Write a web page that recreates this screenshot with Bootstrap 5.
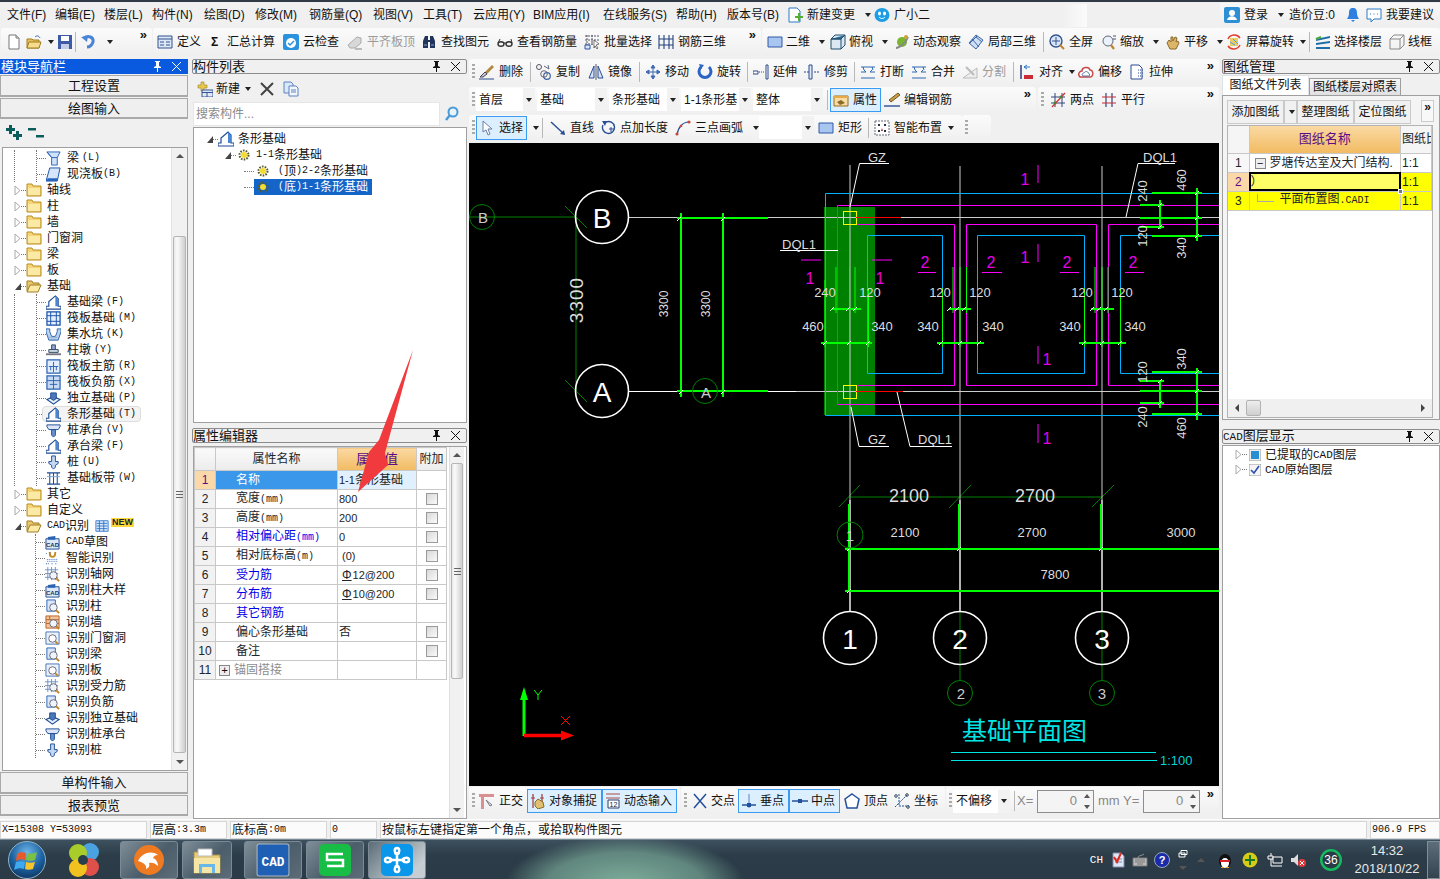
<!DOCTYPE html>
<html lang="zh-CN">
<head>
<meta charset="UTF-8">
<title>基础平面图</title>
<link rel="stylesheet" href="https://cdn.jsdelivr.net/npm/bootstrap@5.3.0/dist/css/bootstrap.min.css">
<style>
html,body{margin:0;padding:0;width:1440px;height:879px;overflow:hidden}
body{background:#f0f0f0;color:#111;font:12px/16px "Liberation Sans","Noto Sans CJK SC",sans-serif}
.lat{font:10px/16px "Liberation Mono","Noto Sans CJK SC",monospace}
.val{font:11px/16px "Liberation Sans",sans-serif}
.k{margin-left:3px}
.ic{width:16px;height:16px;flex:none;display:block}
.w12{width:12px}.w20{width:20px}.w21{width:21px}.w46{width:46px}.w47{width:47px}.w48{width:48px}.w49{width:49px}.w50{width:50px}.w51{width:51px}.w52{width:52px}.w54{width:54px}.w55{width:55px}.w56{width:56px}.w57{width:57px}.w59{width:59px}.w60{width:60px}.w63{width:63px}.w64{width:64px}.w65{width:65px}.w70{width:70px}.w72{width:72px}.w73{width:73px}.w74{width:74px}.w75{width:75px}.w76{width:76px}.w79{width:79px}.w80{width:80px}.w84{width:84px}.w85{width:85px}.w87{width:87px}.w61{width:61px}.w83{width:83px}
.top-line{height:2px;background:#2f3a44}
.menu-bar{height:26px;padding-left:7px}
.menu-bar>*{flex:none}
.menu-right{margin-left:auto;height:24px;padding-left:4px;background:linear-gradient(#f8f8f8,#eee);width:220px}
.menu-gap{width:25px;height:23px;background:linear-gradient(90deg,#f0f0f0,#fbfbfb);margin-left:auto;margin-right:2px}
.tool-row{height:30px}
.seg{height:28px;background:linear-gradient(#fbfbfb,#efefef);border-radius:3px;flex:none;position:relative}
.t{display:flex;align-items:center;gap:4px;flex:none;height:24px;white-space:nowrap}
.t.off{color:#9a9a9a}
.t.g3{gap:3px}
.cr{display:inline-block;flex:none;width:0;height:0;border-top:4px solid #222;border-left:3px solid transparent;border-right:3px solid transparent;margin-left:6px}
.cr.tight{margin-left:2px}
.sep{width:1px;height:20px;background:#b8b8b8;margin:0 5px 0 3px;flex:none}
.sep.tight{margin:0 2px}
.more{position:absolute;right:5px;top:1px;font:bold 13px/12px "Liberation Sans",sans-serif;color:#111}
.grip{width:3px;height:16px;margin:0 4px 0 3px;flex:none;background:repeating-linear-gradient(#aaa 0 2px,transparent 2px 4px)}
.grip.tight{margin-right:1px}
.on{background:#dcefff;border:1px solid #3b9bf2;padding:0 2px}
.dd{display:flex;align-items:center;height:23px;background:#fff;margin-right:2px;flex:none;padding-left:3px}
.dd b{font-weight:400;flex:1;white-space:nowrap;overflow:hidden}
.dd em{width:12px;height:23px;background:#f2f2f2;display:flex;align-items:center;justify-content:center;flex:none}
.dd em .cr{margin:0}
.work{height:761px;padding-top:1px}
.col-l{width:188px;margin-right:4px;flex:none}
.col-m{width:275px;margin-right:2px;flex:none}
.col-c{width:750px;margin-right:3px;flex:none}
.col-r{width:218px;flex:none}
.title{height:15px;flex:none;display:flex;align-items:center;border:1px solid #8c8c8c;border-radius:2px;font-size:13px;line-height:13px;background:#f0f0f0;padding-right:5px;white-space:nowrap}
.title.act{background:#0a5ae0;color:#fff;border-color:#0a5ae0;border-radius:0}
.title span{margin-right:auto}
.title .lat{font-size:11px;margin:0;line-height:13px}
.title svg{width:11px;height:11px;margin-left:8px;flex:none}
.wbtn{--bs-btn-padding-y:0;--bs-btn-font-size:13px;--bs-btn-border-radius:0;--bs-btn-line-height:18px;--bs-btn-color:#111;--bs-btn-bg:#efefef;--bs-btn-border-color:#a9a9a9;border-width:1px;display:block;width:100%;margin-top:1px;border-bottom-width:2px;flex:none;padding-top:1px}
.h22{height:22px}.h21{height:21px}
.lbar{height:27px;flex:none}
.lbar .ic{margin-left:6px}
.box{border:1px solid #a0a0a0;background:#fff;overflow:hidden}
.tree-side{height:624px;margin-top:1px;margin-left:2px;flex:none}
.tree{flex:1;padding-top:2px;min-width:0}
.nd{display:flex;align-items:center;height:16px;white-space:nowrap}
.nd.l1{padding-left:11px}
.tw{width:7px;height:9px;flex:none;display:block}
.dots{height:1px;flex:none;border-top:1px dotted #777}
.d5{width:5px}.d9{width:9px}.d10{width:10px}
.nd.l1 .ic{margin-right:5px}
.nd.l2 .ic{margin-right:6px;width:15px;height:15px}
.nb{margin:0 2px 0 6px!important;width:14px!important}
.kid1{margin-left:11px;border-left:1px dotted #777}
.kid2{margin-left:21px;border-left:1px dotted #777}
.sel-soft{background:#f3f3f3;border:1px solid #ddd;border-radius:4px;height:16px;padding:0 4px 0 3px;margin-left:-4px;display:flex;align-items:center}
.new-tag{font:bold 9px/9px "Liberation Sans",sans-serif;background:#ffd83a;color:#223;padding:0 1px;margin-top:-7px}
.sbar{width:16px;background:#f1f1f1;flex:none;border-left:1px solid #e3e3e3}
.sbar u,.hbar u{display:flex;align-items:center;justify-content:center;text-decoration:none;flex:none;height:16px}
.up{width:0;height:0;border-bottom:4px solid #555;border-left:4px solid transparent;border-right:4px solid transparent}
.down{width:0;height:0;border-top:4px solid #555;border-left:4px solid transparent;border-right:4px solid transparent}
.lf{width:0;height:0;border-right:4px solid #444;border-top:4px solid transparent;border-bottom:4px solid transparent}
.rt{width:0;height:0;border-left:4px solid #444;border-top:4px solid transparent;border-bottom:4px solid transparent}
.sp72{height:72px;flex:none}
.thumb{background:linear-gradient(90deg,#e8e8e8,#fafafa 30%,#cfcfcf);border:1px solid #b5b5b5;border-radius:2px;margin:0 1px;display:flex;align-items:center;justify-content:center}
.thumb-a{height:517px}.thumb-b{height:216px}
.thumb i{width:7px;height:7px;background:repeating-linear-gradient(#666 0 1px,transparent 1px 3px)}
.m-bar{height:27px;margin-top:1px;flex:none;padding-left:5px}
.m-search{height:25px;flex:none;margin-left:1px}
.m-input{width:247px;height:24px;background:#fff;border:1px solid #e6e6e6;color:#8a8a8a;padding:3px 2px;line-height:16px}
.m-tree{height:296px;margin-left:1px;flex:none;padding-top:3px}
.selrow{background:#1565c8;color:#fff;padding:0 4px 0 0;height:16px;line-height:16px;display:flex;align-items:center}
.m-gap{height:5px;flex:none}
.grid-box{flex:1;display:flex;margin:3px 0 0 1px;min-height:0}
.pg{width:253px;table-layout:fixed;border-collapse:collapse;margin:0;flex:none;align-self:flex-start;--bs-table-bg:transparent}
.pg td,.pg th{height:19px;padding:0 1px;border:1px solid #c8c8c8;font-weight:400;line-height:14px;overflow:hidden;white-space:nowrap;background:#fff;vertical-align:middle}
.pg .rn{background:#f2f2f2;text-align:center}
.pg .hd th{height:23px;background:linear-gradient(#fafafa,#ececec);text-align:center}
.pg .hd .gold{background:linear-gradient(#fad9a3,#f2bb62);color:#5b0d86;font-size:14px}
.pg .act .rn{background:#fbd8a7;color:#5b0d86}
.pg .act .nm{background:#3b97ea;color:#fff}
.pg .act .vl{background:#e0f0ff}
.pg .nm{padding-left:20px}
.pg .blue{color:#0000e6}
.pg .grey{color:#8d8d8d;padding-left:3px}
.pg .ck{text-align:center;padding:0}
.rebar{text-decoration:underline;text-underline-offset:1px;margin:0 1px 0 3px}
.cbx{display:inline-block;width:12px;height:12px;border:1px solid #9a9a9a;background:linear-gradient(135deg,#d8d8d8,#fafafa);vertical-align:-2px}
.pl{display:inline-block;width:11px;height:11px;border:1px solid #888;background:#eee;text-align:center;line-height:9px;font-size:11px;color:#111;margin-right:4px}
.cad{height:643px;background:#000;flex:none;margin:1px 0}
.cad svg{display:block}
.ct{font-family:"Liberation Sans","Noto Sans CJK SC",sans-serif;font-size:13px;fill:#ddd;text-anchor:middle;dominant-baseline:central}
.ct.s{font-size:12px}.ct.l{font-size:18px}.ct.xl{font-size:19px;letter-spacing:1px}.ct.bb{font-size:28px;fill:#fff}.ct.mg{font-size:16px;fill:#e600e6}
.ct.sm{font-size:15px;fill:#ccc}
.ct.ti{font-size:25px;fill:#00e4e4;text-anchor:start}.ct.ra{font-size:13px;fill:#00d4d4;text-anchor:start}
.w2{stroke:#0f0;stroke-width:2;fill:none}
.w1{stroke:#0f0;stroke-width:1;fill:none}
.g1{stroke:#008000;stroke-width:1;fill:none}
.wh{stroke:#fff;stroke-width:1;fill:none}
.gy{stroke:#ccc;stroke-width:1;fill:none}
.bub{stroke:#fff;stroke-width:1.6;fill:none}
.cy{stroke:#00b0ff;stroke-width:1;fill:none}
.mgt{stroke:#f0f;stroke-width:1;fill:none}
.cyl{stroke:#00e4e4;stroke-width:1;fill:none}
.tabs{margin-top:1px;height:21px;flex:none;--bs-nav-tabs-border-width:0;--bs-nav-tabs-border-radius:0;flex-wrap:nowrap;border:0}
.tabs .nav-link{padding:0;color:#111;height:21px;line-height:19px;font-size:12px;width:87px;text-align:center;background:#f0f0f0;border:1px solid #9e9e9e;border-bottom:0}
.tabs .nav-link.active{background:#fff;color:#111}
.tabs .ina{width:92px;margin-top:3px;height:18px;line-height:17px;background:linear-gradient(#f7f7f7,#dedede);padding:0}
.pane{height:325px;flex:none;border:1px solid #9e9e9e;background:#f4f4f4;padding:4px 4px 1px 4px;margin-top:-1px;position:relative}
.pbtns{height:25px;flex:none}
.pb{height:24px;border:1px solid #c9c9c9;background:#f1f1f1;flex:none;display:flex;align-items:center;justify-content:center;font-size:12px;white-space:nowrap}
.pb.c{width:13px}.pb.m{width:57px}
.more-box{width:13px;height:22px;margin-left:auto;margin-right:1px;border:1px solid #ccc;font:bold 12px/12px "Liberation Sans",sans-serif;text-align:center;background:#f8f8f8}
.tbl{flex:1;display:flex;flex-direction:column;border:1px solid #b3b3b3;background:#fff;min-height:0;width:206px}
.rg{width:204px;table-layout:fixed;border-collapse:collapse;margin:0;flex:none;--bs-table-bg:transparent}
.rg td,.rg th{height:19px;padding:0 1px;border:1px solid #c8c8c8;border-top:0;border-left:0;font-weight:400;overflow:hidden;white-space:nowrap;background:#fff;line-height:14px;vertical-align:middle}
.rg .rn{text-align:center;background:#f7f7f7}
.rg th{height:27px;text-align:center;background:#f5f5f5}
.rg th.gold{background:linear-gradient(#fad9a3,#f2bb62);color:#5b0d86;font-size:13px}
.rg .y td,.rg td.y{background:#ffff00}
.rg .cur{background:#ffff66;outline:2px solid #000;outline-offset:-2px;position:relative;overflow:visible}
.rg .cur::after{content:"";position:absolute;right:-3px;bottom:-3px;width:5px;height:5px;background:#777;border:1px solid #fff}
.rg .gr{background:#fbd8a7!important;color:#5b0d86}
.tee{display:inline-block;width:17px;height:8px;border-left:1px solid #aaa;border-bottom:1px solid #aaa;margin:0 6px 4px 6px;vertical-align:middle}
.hbar{margin-top:auto;height:18px;background:#f0f0f0;flex:none}
.hbar u{width:18px;height:18px}
.hbar em{width:15px;height:16px;background:linear-gradient(#eee,#cfcfcf);border:1px solid #b3b3b3;border-radius:2px;display:block}
.r-gap{height:9px;flex:none}
.r-layers{flex:1;margin-top:1px;padding-top:1px;min-height:0}
.nd.r{padding-left:12px;height:15px}
.nd.r .ic{width:12px;height:12px;margin:0 4px 0 2px}
.nd.r .lat{font-size:11px}
.snap{height:28px;flex:none}
.num{width:57px;height:23px;border:1px solid #8d8d8d;background:#f4f4f4;display:flex;align-items:center;justify-content:flex-end;color:#888;padding-right:16px;flex:none;position:relative;font-size:13px}
.num i{position:absolute;right:3px;width:0;height:0;border-left:3px solid transparent;border-right:3px solid transparent}
.num .a{top:3px;border-bottom:4px solid #555}
.num .b{bottom:3px;border-top:4px solid #555}
.lblg{color:#888;flex:none;font-size:13px}
.status{height:20px;border-top:1px solid #fff}
.cell{height:18px;background:#fbfbfb;border:1px solid #d6d6d6;margin-right:3px;flex:none;display:flex;align-items:center;padding-left:1px;white-space:nowrap;overflow:hidden}
.c1{width:147px}.c2{width:77px}.c3{width:97px}.c4{width:47px}.c5{width:987px}.c6{width:70px;margin-right:0}
.taskbar{height:40px;position:relative;color:#fff;border-top:1px solid #768a96;background:radial-gradient(ellipse 120px 48px at 625px 44px,rgba(140,195,170,.85),rgba(140,195,170,.55) 65%,rgba(140,195,170,0) 100%),linear-gradient(#3d505d,#2c3d49 40%,#2a3a46)}
.tbtn{height:38px;border:1px solid #7a8b96;border-radius:3px;background:linear-gradient(135deg,#7f8e98,#4c5e6b 55%,#5c6c78);display:flex;align-items:center;justify-content:center;flex:none}
.tbtn.hi{background:linear-gradient(135deg,#5c6d78,#c6ced3 80%)}
.tb1{width:58px;margin-left:2px}.tb2{width:50px;margin-left:4px;margin-right:12px}.tb3{width:58px}.tb4{width:58px;margin-left:4px}.tb5{width:58px;margin-left:4px}
.big{width:32px;height:32px;flex:none;display:block}
.big.wide{width:34px;height:34px}
.start{width:40px;height:38px;margin-left:7px;margin-right:19px;flex:none}
.pin{width:36px;height:36px;margin-right:16px;flex:none}
.tray{margin-left:auto;height:38px;flex:none;color:#fff}
.tray>*{flex:none}
.ch{font:11px/14px "Liberation Mono",monospace;margin-right:7px}
.mr6{margin-right:6px}.mr7{margin-right:7px}.mr8{margin-right:8px}.mr9{margin-right:9px}.mr12{margin-right:12px}.mr14{margin-right:14px}
.rs{width:10px}
.clock{width:80px;text-align:center;font-size:13px;line-height:18px;margin:0 0 0 5px;color:#e8e8e8}
.desk{width:13px;height:38px;border:1px solid #7f8f9a;background:linear-gradient(#5d6e7a,#33444f)}
.ml1{margin-left:1px}.ml4{margin-left:4px}.ml2{margin-left:2px}.ml3{margin-left:3px}
.arrow-over{position:absolute;left:350px;top:345px;pointer-events:none}
.seg-a{width:151px;padding-left:5px;margin-left:1px;margin-right:1px}
.seg-b{width:608px;padding-left:4px;margin-right:1px}
.seg-c{flex:1;padding-left:5px}
.seg-wide{height:27px;flex:none}
.seg-wide .seg{height:27px;padding-bottom:2px}
.col-c .seg-wide+.seg-wide{margin-top:1px}
.r1{width:750px}.r2a{width:567px;margin-right:2px}.r2b{flex:1}.r3a{width:493px}.r3b{width:29px}
.m-lvl2{margin-left:30px}
.m-lvl3{padding-left:50px}
.ic-gear{width:12px;height:12px;margin:0 6px 0 2px}
.m-lvl3 .ic-gear{margin:0 9px 0 3px}
.pg-x{width:30px}.r-x{width:31px}
.pg-bar{width:15px;margin-left:2px;border-left:1px solid #ddd}
.cad-kids{margin-left:32px!important}
.sn1{width:211px}.sn2{width:264px;margin:0 1px}.sn3{flex:1}
.dw{display:block}
</style>
</head>
<body class="d-flex flex-column">

<svg width="0" height="0" class="position-absolute">
<defs>
<symbol id="pin" viewBox="0 0 11 11"><path d="M3 0h5v1H7v4l2 1v1H6v4H5V7H2V6l2-1V1H3z" fill="currentColor"/></symbol>
<symbol id="cls" viewBox="0 0 11 11"><path d="M1 1l9 9M10 1l-9 9" stroke="currentColor" stroke-width="1" fill="none"/></symbol>
<symbol id="new" viewBox="0 0 16 16"><path d="M3 1h7l3 3v11H3z" fill="#fff" stroke="#777"/><path d="M10 1v3h3" fill="#ddd" stroke="#777"/></symbol>
<symbol id="open" viewBox="0 0 16 16"><path d="M1 5h5l1 1h6v8H1z" fill="#e8c05f" stroke="#a27c1e"/><path d="M3 8h12l-2 6H1z" fill="#f6dc8c" stroke="#a27c1e"/><path d="M9 3c2-2 4-1 5 1" stroke="#3566b5" fill="none"/></symbol>
<symbol id="save" viewBox="0 0 16 16"><path d="M1 1h14v14H1z" fill="#3d5aa8"/><path d="M4 2h8v5H4z" fill="#fff"/><path d="M4 10h8v5H4z" fill="#c3cde6"/></symbol>
<symbol id="undo" viewBox="0 0 16 16"><path d="M3 4c4-3 10-1 9 4-1 3-3 5-6 5" stroke="#4a84d6" stroke-width="3" fill="none"/><path d="M0 3l7-1-1 6z" fill="#4a84d6"/></symbol>
<symbol id="def" viewBox="0 0 16 16"><path d="M1 2h14v12H1z" fill="#dbe6f6" stroke="#34528f"/><path d="M1 5h14M3 8h4M3 11h4M9 8h4M9 11h4" stroke="#34528f"/></symbol>
<symbol id="cloud" viewBox="0 0 16 16"><rect width="16" height="16" rx="2" fill="#2b93de"/><circle cx="8" cy="9" r="5" fill="#fff"/><path d="M5 9l2 2 4-4" stroke="#2b93de" stroke-width="1.5" fill="none"/></symbol>
<symbol id="flush" viewBox="0 0 16 16"><path d="M1 11l9-8 4 1v5l-6 5H3z" fill="#d8d8d8" stroke="#aaa"/><path d="M8 14h7v2H8z" fill="#bbb"/></symbol>
<symbol id="bino" viewBox="0 0 16 16"><path d="M2 7l2-5h3v4h2V2h3l2 5v7H9V8H7v6H2z" fill="#20345c"/><path d="M3 11h3M10 11h3" stroke="#8aa3d0"/></symbol>
<symbol id="glass" viewBox="0 0 16 16"><ellipse cx="4" cy="10" rx="3" ry="2.2" fill="none" stroke="#333" stroke-width="1.4"/><ellipse cx="12" cy="10" rx="3" ry="2.2" fill="none" stroke="#333" stroke-width="1.4"/><path d="M7 9h2M1 9l2-4M15 9l-1-4" stroke="#333"/></symbol>
<symbol id="batch" viewBox="0 0 16 16"><path d="M1 2h14M1 6h14M1 10h9M3 1v14M8 1v10" stroke="#556" stroke-dasharray="2 1"/><path d="M1 11h5v4H1z" fill="#dce6f7" stroke="#2d55a8"/><path d="M10 6l5 4-3 1 2 3-1 1-2-3-1 2z" fill="#fff" stroke="#444" stroke-width=".7"/></symbol>
<symbol id="r3d" viewBox="0 0 16 16"><path d="M1 1v14M6 1v14M11 1v14M15 1v14M1 5h14M1 11h14" stroke="#24407e" stroke-width="1.1"/></symbol>
<symbol id="rect" viewBox="0 0 16 16"><path d="M1 3h14v10H1z" fill="#a9c6f1" stroke="#3159a8"/></symbol>
<symbol id="cube" viewBox="0 0 16 16"><path d="M1 5l4-4h10v10l-4 4H1z" fill="#dbe8f3" stroke="#1f4c6c"/><path d="M1 5h10l4-4" fill="#2b6f96" stroke="#1f4c6c"/><path d="M1 5h10v10" fill="none" stroke="#1f4c6c"/></symbol>
<symbol id="orbit" viewBox="0 0 16 16"><circle cx="8" cy="8" r="5" fill="#79b530"/><path d="M2 14c3 0 10-5 12-11" stroke="#888" stroke-width="2" fill="none"/><circle cx="12" cy="3" r="2" fill="#cfa133"/></symbol>
<symbol id="loc3d" viewBox="0 0 16 16"><path d="M8 1l7 5-7 9-7-6z" fill="#cfe0f5" stroke="#3a66a8"/><path d="M4 5l7 8M8 3l6 5M2 9l7-7" stroke="#3a66a8"/></symbol>
<symbol id="fit" viewBox="0 0 16 16"><circle cx="7" cy="7" r="6" fill="#dbe7f7" stroke="#33538f" stroke-width="1.4"/><path d="M7 3v8M3 7h8" stroke="#33538f"/><path d="M11 11l4 4" stroke="#c08428" stroke-width="2"/></symbol>
<symbol id="zoom" viewBox="0 0 16 16"><circle cx="7" cy="7" r="5" fill="#eaf2fb" stroke="#667"/><path d="M10 11l3 4" stroke="#c08428" stroke-width="2.2"/><path d="M12 2l3 0M12 5h3" stroke="#456"/></symbol>
<symbol id="hand" viewBox="0 0 16 16"><path d="M2 9l2-3 2 2V3h2v4l2-4 2 1-1 4 2-1 1 2-3 6H5z" fill="#dcb568" stroke="#8a6a28"/></symbol>
<symbol id="rot" viewBox="0 0 16 16"><rect x="4" y="4" width="8" height="8" fill="#e8cc64"/><path d="M4 8l5 3M7 5l5 5" stroke="#5a9ad6"/><path d="M2 5a7 7 0 0 1 12-1M14 11a7 7 0 0 1-12 1" stroke="#e03c2c" stroke-width="1.5" fill="none"/></symbol>
<symbol id="layer" viewBox="0 0 16 16"><path d="M1 5l14-3v2L1 7zM1 9l14-2v2L1 11zM1 13h14v2H1z" fill="#1e6fa8"/><path d="M1 5l5-2" stroke="#4aa83c" stroke-width="2"/></symbol>
<symbol id="wire" viewBox="0 0 16 16"><path d="M1 5h10v10H1zM1 5l4-4h10v10l-4 4M11 5l4-4" fill="none" stroke="#888"/></symbol>
<symbol id="del" viewBox="0 0 16 16"><path d="M13 1l2 2-7 7-2-2z" fill="#b08a3e"/><path d="M6 8l2 2-4 3H1z" fill="#c8c8d8" stroke="#445"/><path d="M0 15h15" stroke="#2b4b8c"/></symbol>
<symbol id="copy" viewBox="0 0 16 16"><circle cx="3" cy="3" r="2.5" fill="none" stroke="#556"/><circle cx="11" cy="12" r="3.3" fill="none" stroke="#3d62a8" stroke-width="1.2"/><circle cx="8" cy="10" r="3.3" fill="none" stroke="#667"/><path d="M8 2l5 3-1-4" stroke="#667" fill="none"/></symbol>
<symbol id="mirror" viewBox="0 0 16 16"><path d="M6 2L1 14h5zM10 2l5 12h-5z" fill="#d6e3f6" stroke="#2a4d94"/><path d="M8 0v16" stroke="#556"/></symbol>
<symbol id="move" viewBox="0 0 16 16"><path d="M8 1v14M1 8h14M8 1L6 4h4zM8 15l-2-3h4zM1 8l3-2v4zM15 8l-3-2v4z" fill="#3e69b4" stroke="#3e69b4"/></symbol>
<symbol id="turn" viewBox="0 0 16 16"><path d="M4 3a6 6 0 1 0 8 0" stroke="#2a64c4" stroke-width="3" fill="none"/><path d="M2 0l5 1-3 4z" fill="#2a64c4"/></symbol>
<symbol id="ext" viewBox="0 0 16 16"><path d="M13 1v14h2V1zM0 7h5v3H0z" fill="#fff" stroke="#2c4b8c"/><path d="M6 8h6" stroke="#2c4b8c" stroke-dasharray="1 1"/></symbol>
<symbol id="trim" viewBox="0 0 16 16"><path d="M5 1v14h3V1z" fill="#dfe8f8" stroke="#2c4b8c"/><path d="M0 8h5M10 8h5" stroke="#2c4b8c" stroke-width="1.2" stroke-dasharray="2 1"/></symbol>
<symbol id="brk" viewBox="0 0 16 16"><path d="M1 3h14M1 14h14" stroke="#2c66b0"/><path d="M1 8h5l-2-2M15 8h-5l2-2M3 3l1 3M12 3l1 3" stroke="#2c66b0" fill="none"/></symbol>
<symbol id="split" viewBox="0 0 16 16"><path d="M1 14h14V4z" fill="#eee" stroke="#bbb"/><path d="M4 3l8 8" stroke="#bbb" stroke-width="2"/></symbol>
<symbol id="align" viewBox="0 0 16 16"><path d="M2 1v14" stroke="#2a3f78" stroke-width="1.5"/><path d="M5 11h9v4H5z" fill="#cc2a36"/><path d="M5 3h6M5 3l3-2M5 3l3 2" stroke="#2a78c4" fill="none"/></symbol>
<symbol id="off" viewBox="0 0 16 16"><path d="M2 13c-3-3 0-6 2-6 0-4 7-5 8-1 3 0 4 5 1 7z" fill="#fff" stroke="#c64a4a" stroke-width="1.5"/><path d="M5 12c-2-2 0-3 1-3 1-2 4-2 4 0 2 0 2 3 1 3z" fill="none" stroke="#5577aa"/></symbol>
<symbol id="strch" viewBox="0 0 16 16"><path d="M2 1h8l3 3v11H2z" fill="#fff" stroke="#2a4d94"/><path d="M9 6h5M9 9h5M9 12h5" stroke="#2a4d94" stroke-dasharray="1 1"/></symbol>
<symbol id="prop" viewBox="0 0 16 16"><path d="M1 4h14v10H1z" fill="#f7dca3" stroke="#9a6c1c"/><path d="M1 4h14v2H1z" fill="#e8a948"/><path d="M4 10l4-2 4 3-5 2z" fill="#8a6a28"/></symbol>
<symbol id="edit" viewBox="0 0 16 16"><path d="M14 1l2 2-9 7-2-2z" fill="#c8a040" stroke="#70562a"/><path d="M0 14h16" stroke="#2a4d94" stroke-width="1.4"/></symbol>
<symbol id="twopt" viewBox="0 0 16 16"><path d="M5 1v14M12 1v14M1 5h14M1 11h14" stroke="#33477e"/><path d="M2 15L15 1" stroke="#d63030" stroke-width="1.3"/><circle cx="5" cy="11" r="1.4" fill="#3f8a2c"/><circle cx="11" cy="5" r="1.4" fill="#3f8a2c"/></symbol>
<symbol id="para" viewBox="0 0 16 16"><path d="M5 1v14M11 1v14" stroke="#33477e" stroke-width="1.2"/><path d="M1 5h14M1 11h14" stroke="#c42f3a" stroke-width="1.2"/></symbol>
<symbol id="arw" viewBox="0 0 16 16"><path d="M4 1v11l3-2 2 5 2-1-2-5h4z" fill="#fff" stroke="#6a7da8"/></symbol>
<symbol id="dline" viewBox="0 0 16 16"><path d="M1 2l13 12" stroke="#2a4d94" stroke-width="1.4"/><path d="M15 15l-5-1 4-4z" fill="#2a4d94"/></symbol>
<symbol id="ptl" viewBox="0 0 16 16"><path d="M3 5a6 6 0 1 0 3-3" stroke="#2a4d94" stroke-width="1.4" fill="none"/><path d="M2 1l5 0-2 5z" fill="#2a4d94"/><path d="M9 9h5M11 7v5" stroke="#2a4d94"/></symbol>
<symbol id="arc" viewBox="0 0 16 16"><path d="M2 15C3 7 8 2 14 2" stroke="#2a4d94" stroke-width="1.2" fill="none"/><circle cx="2" cy="14" r="1.6" fill="#c84a3c"/><circle cx="14" cy="2" r="1.6" fill="#c84a3c"/><circle cx="6" cy="6" r="1.3" fill="#c84a3c"/></symbol>
<symbol id="smart" viewBox="0 0 16 16"><path d="M1 1h14v14H1z" fill="#fff" stroke="#667" stroke-dasharray="2 1"/><path d="M4 4h2v2H4zM10 4h2v2h-2zM4 10h2v2H4zM10 10h2v2h-2z" fill="#234"/><path d="M8 8l-1 3 2 0z" fill="#a03030"/></symbol>
<symbol id="ortho" viewBox="0 0 16 16"><path d="M0 1h15v3H5v12H2V4H0z" fill="#d99090"/><path d="M7 7l4 6 2-1z" fill="none" stroke="#778"/></symbol>
<symbol id="snap1" viewBox="0 0 16 16"><path d="M3 1v14M12 1v8" stroke="#a24040" stroke-width="1.3"/><path d="M1 5h4M10 5h4" stroke="#a24040"/><path d="M5 9l3-3 5 3 1 5-6 2-3-3z" fill="#e0c070" stroke="#8a6a28"/></symbol>
<symbol id="snap2" viewBox="0 0 16 16"><path d="M1 1h14M1 5h14" stroke="#b04a4a"/><path d="M3 7h11v8H3z" fill="#fff" stroke="#2a3f68"/><text x="8.5" y="14" font-size="7" text-anchor="middle" fill="#223" font-family="Liberation Sans">12</text></symbol>
<symbol id="cross" viewBox="0 0 16 16"><path d="M2 1l12 14M14 1L2 15" stroke="#22509c" stroke-width="1.5"/></symbol>
<symbol id="perp" viewBox="0 0 16 16"><path d="M1 12h14" stroke="#22509c" stroke-width="1.5"/><path d="M8 1v14" stroke="#5c83bc"/><rect x="6" y="10" width="4" height="4" fill="#22509c"/></symbol>
<symbol id="mid" viewBox="0 0 16 16"><path d="M0 8h16" stroke="#22509c" stroke-width="1.5"/><rect x="6" y="6" width="4" height="4" fill="#22509c"/></symbol>
<symbol id="vert" viewBox="0 0 16 16"><path d="M8 1l7 5-2 9H3L1 6z" fill="#fff" stroke="#22509c" stroke-width="1.5"/></symbol>
<symbol id="coord" viewBox="0 0 16 16"><path d="M5 1v12h10" stroke="#22509c" stroke-dasharray="2 1" fill="none"/><path d="M1 14L13 2" stroke="#22509c" stroke-dasharray="2 1"/><circle cx="2" cy="3" r="1.3" fill="none" stroke="#345"/><circle cx="14" cy="14" r="1.3" fill="none" stroke="#345"/><circle cx="13" cy="2" r="1.3" fill="none" stroke="#345"/></symbol>
<symbol id="fo" viewBox="0 0 16 16"><path d="M1 4V2h5l1 2h8v10H1z" fill="#f6d572" stroke="#b58b26"/><path d="M2 6h12v7H2z" fill="#fbe9a6"/></symbol>
<symbol id="foo" viewBox="0 0 16 16"><path d="M1 13V3h5l1 2h6v2" fill="#e8c76c" stroke="#a17d22"/><path d="M1 14L4 7h11l-3 7z" fill="#fbe9a6" stroke="#a17d22"/></symbol>
<symbol id="beam" viewBox="0 0 16 16"><path d="M1 1h14l-3 6v8H6V7z" fill="#cfe2fa" stroke="#2a62b4"/><path d="M6 7h6M1 1l5 6" stroke="#2a62b4"/></symbol>
<symbol id="slab" viewBox="0 0 16 16"><path d="M4 1h11l-3 14H0z" fill="#d6e5f9" stroke="#164fa8"/><path d="M0 15h12l1-3H2z" fill="#2565c0"/></symbol>
<symbol id="strip" viewBox="0 0 16 16"><path d="M0 15h16v-3h-3V4L10 1 3 7v5H0z" fill="#fff" stroke="#1d4b92" stroke-width="1.2"/><path d="M10 1l3 3v8h-3z" fill="#4b86d2"/></symbol>
<symbol id="raft" viewBox="0 0 16 16"><path d="M1 1h14v14H1z" fill="#e5effb" stroke="#164fa8" stroke-width="1.3"/><path d="M5 1v14M11 1v14M1 5h14M1 11h14" stroke="#164fa8"/></symbol>
<symbol id="sump" viewBox="0 0 16 16"><path d="M0 2h4v3l2 5h4l2-5V2h4v3l-3 9H3L0 5z" fill="#bcd3ee" stroke="#2c62ae"/><path d="M3 11h10M5 13h6" stroke="#6f98cc" stroke-dasharray="1 1"/></symbol>
<symbol id="pier" viewBox="0 0 16 16"><path d="M6 2h4v5H6z" fill="#8ba9d6" stroke="#345"/><path d="M3 7h10v3H3z" fill="#cfdcef" stroke="#345"/><path d="M0 11h16v2H0z" fill="#778"/></symbol>
<symbol id="sq1" viewBox="0 0 16 16"><path d="M1 1h14v14H1z" fill="#e2edfb" stroke="#2a62b4" stroke-width="1.3"/><path d="M8 3v11M3 8h10M5 8v4M11 8v4" stroke="#2a62b4"/></symbol>
<symbol id="sq2" viewBox="0 0 16 16"><path d="M1 1h14v14H1z" fill="#c7daf4" stroke="#2a62b4" stroke-width="1.3"/><path d="M1 6h14M8 1v14M4 10h8" stroke="#2a62b4"/></symbol>
<symbol id="iso" viewBox="0 0 16 16"><path d="M1 9l7-3 7 3-7 5z" fill="#e5effb" stroke="#1d4b92" stroke-width="1.2"/><path d="M5 2h6v6l-3 2-3-2z" fill="#4b78b8" stroke="#1d4b92"/></symbol>
<symbol id="cap" viewBox="0 0 16 16"><path d="M1 2h14v2L13 7H3L1 4z" fill="#dbe7f8" stroke="#1d4b92"/><path d="M6 7h4v6l-2 2-2-2z" fill="#6a93cf" stroke="#1d4b92"/></symbol>
<symbol id="pile" viewBox="0 0 16 16"><path d="M6 1h4v6h3v2l-3 2v2l-2 2-2-2v-2L3 9V7h3z" fill="#c5d8f1" stroke="#1d4b92"/></symbol>
<symbol id="band" viewBox="0 0 16 16"><path d="M1 2h14M1 14h14M4 2v12M8 2v12M12 2v12" stroke="#1d4b92" stroke-width="1.1"/><path d="M1 6h14" stroke="#7fa3d4"/></symbol>
<symbol id="cadx" viewBox="0 0 16 16"><path d="M1 4h14v11H1z" fill="#dbe8f7" stroke="#1d4b92"/><path d="M3 2l8-1v4H3z" fill="#2a62b4"/><text x="8" y="13" font-size="6.4" font-weight="700" text-anchor="middle" fill="#1a2f5c" font-family="Liberation Sans">CAD</text></symbol>
<symbol id="magn" viewBox="0 0 16 16"><path d="M1 2h1v1H1zM5 1h1v5H5zM3 13h1v1H3zM7 13h1v1H7zM11 13h1v1h-1zM1 13h1v1H1z" fill="#2c62ae"/><path d="M5 1c0 7 6 7 6 0" stroke="#c48a1e" stroke-width="2" fill="none"/><path d="M2 9h12M2 11h12" stroke="#3c72c0" stroke-dasharray="1 1"/></symbol>
<symbol id="grx" viewBox="0 0 16 16"><path d="M3 0v14M7 0v14M11 0v14M0 3h14M0 7h14M0 11h14" stroke="#6a8ec4"/><circle cx="9" cy="9" r="4" fill="#eef4fb" stroke="#667"/><path d="M12 12l3 3" stroke="#c08428" stroke-width="2"/></symbol>
<symbol id="colx" viewBox="0 0 16 16"><path d="M2 1h9v12H2z" fill="#dbe7f8" stroke="#2a62b4"/><circle cx="9" cy="9" r="4" fill="#eef4fb" stroke="#667"/><path d="M12 12l3 3" stroke="#c08428" stroke-width="2"/></symbol>
<symbol id="wlx" viewBox="0 0 16 16"><path d="M1 1h14v13H1z" fill="#f3c49a" stroke="#b4622a"/><path d="M1 5h14M1 9h14M5 1v4M10 5v4" stroke="#b4622a"/><circle cx="9" cy="9" r="4" fill="#eef4fb" stroke="#667"/><path d="M12 12l3 3" stroke="#c08428" stroke-width="2"/></symbol>
<symbol id="wdx" viewBox="0 0 16 16"><path d="M1 1h14v13H1z" fill="#eaf1fb" stroke="#4473b8"/><circle cx="8" cy="8" r="4" fill="#fff" stroke="#667"/><path d="M11 11l3 3" stroke="#c08428" stroke-width="2"/></symbol>
<symbol id="ic-cols" viewBox="0 0 16 16"><path d="M1 2h14v12H1z" fill="#dbeafb" stroke="#2a72c8"/><path d="M5 2v12M10 2v12M2 5h12M2 8h12M2 11h12" stroke="#2a72c8"/></symbol>
<symbol id="gear" viewBox="0 0 12 12"><circle cx="6" cy="6" r="3" fill="#f5dc30"/><circle cx="6" cy="6" r="4.500" fill="none" stroke="#5a5a2a" stroke-width="2" stroke-dasharray="1.600 1.200"/></symbol>
</defs>
</svg>

<div class="top-line flex-none"></div>

<div class="menu-bar d-flex align-items-center flex-none">
  <span class="w48">文件(F)</span><span class="w49">编辑(E)</span><span class="w48">楼层(L)</span><span class="w52">构件(N)</span><span class="w51">绘图(D)</span><span class="w54">修改(M)</span><span class="w64">钢筋量(Q)</span><span class="w50">视图(V)</span><span class="w50">工具(T)</span><span class="w60">云应用(Y)</span><span class="w70">BIM应用(I)</span><span class="w73">在线服务(S)</span><span class="w51">帮助(H)</span><span class="w60">版本号(B)</span>
  <span class="t w87"><svg class="ic" viewBox="0 0 16 16"><path d="M2 1h8l3 3v11H2z" fill="#fff" stroke="#2a7ac8"/><path d="M8 9h3V6h2v3h3v2h-3v3h-2v-3H8z" fill="#54ae2f"/></svg><span>新建变更</span><i class="cr"></i></span>
  <span class="t"><svg class="ic" viewBox="0 0 16 16"><ellipse cx="8" cy="8" rx="7.5" ry="7" fill="#1c9de4"/><ellipse cx="5.5" cy="6.5" rx="1.5" ry="2" fill="#fff"/><ellipse cx="10.5" cy="6.5" rx="1.5" ry="2" fill="#fff"/><path d="M5 10c2 2 4 2 6 0" stroke="#fff" fill="none"/></svg><span>广小二</span></span>
  <div class="menu-gap"></div>
  <div class="menu-right d-flex align-items-center">
    <span class="t w65"><svg class="ic" viewBox="0 0 16 16"><rect width="16" height="16" rx="2" fill="#2e8fd4"/><circle cx="8" cy="6" r="3" fill="#fff"/><path d="M3 13c1-5 9-5 10 0z" fill="#fff"/></svg><span>登录</span><i class="cr"></i></span>
    <span class="w56 flex-none">造价豆:0</span>
    <span class="w21 flex-none"><svg class="ic" viewBox="0 0 16 16"><path d="M8 1c3 0 4 2 4 5 0 3 1 4 2 6H2c1-2 2-3 2-6 0-3 1-5 4-5z" fill="#2f7fe0"/><path d="M6 13h4l-2 2z" fill="#2f7fe0"/></svg></span>
    <span class="t"><svg class="ic" viewBox="0 0 16 16"><path d="M1 2h14v10H8l-3 3v-3H1z" fill="#fff" stroke="#2a7ac8"/><path d="M4 7h1M7.5 7h1M11 7h1" stroke="#2a7ac8"/></svg><span>我要建议</span></span>
  </div>
</div>

<div class="tool-row d-flex flex-none">
  <div class="seg d-flex align-items-center position-relative seg-a">
    <span class="t w20"><svg class="ic" viewBox="0 0 16 16"><use href="#new"/></svg></span>
    <span class="t"><svg class="ic" viewBox="0 0 16 16"><use href="#open"/></svg><i class="cr tight"></i></span>
    <span class="t ml3"><svg class="ic" viewBox="0 0 16 16"><use href="#save"/></svg></span><i class="sep ml2"></i>
    <span class="t"><svg class="ic" viewBox="0 0 16 16"><use href="#undo"/></svg><i class="cr"></i></span>
    <span class="more">»</span>
  </div>
  <div class="seg d-flex align-items-center seg-b">
    <span class="t w54"><svg class="ic" viewBox="0 0 16 16"><use href="#def"/></svg>定义</span>
    <span class="t w72"><b class="w12 flex-none">Σ</b>汇总计算</span>
    <span class="t w64"><svg class="ic" viewBox="0 0 16 16"><use href="#cloud"/></svg>云检查</span>
    <span class="t w74 off"><svg class="ic" viewBox="0 0 16 16"><use href="#flush"/></svg>平齐板顶</span>
    <span class="t w76"><svg class="ic" viewBox="0 0 16 16"><use href="#bino"/></svg>查找图元</span>
    <span class="t w87"><svg class="ic" viewBox="0 0 16 16"><use href="#glass"/></svg>查看钢筋量</span>
    <span class="t w74"><svg class="ic" viewBox="0 0 16 16"><use href="#batch"/></svg>批量选择</span>
    <span class="t"><svg class="ic" viewBox="0 0 16 16"><use href="#r3d"/></svg>钢筋三维</span>
    <span class="more">»</span>
  </div>
  <div class="seg d-flex align-items-center seg-c">
    <span class="t w63 g3"><svg class="ic" viewBox="0 0 16 16"><use href="#rect"/></svg>二维<i class="cr"></i></span>
    <span class="t w64 g3"><svg class="ic" viewBox="0 0 16 16"><use href="#cube"/></svg>俯视<i class="cr"></i></span>
    <span class="t w74 g3"><svg class="ic" viewBox="0 0 16 16"><use href="#orbit"/></svg>动态观察</span>
    <span class="t w72"><svg class="ic" viewBox="0 0 16 16"><use href="#loc3d"/></svg>局部三维</span><i class="sep"></i>
    <span class="t w52"><svg class="ic" viewBox="0 0 16 16"><use href="#fit"/></svg>全屏</span>
    <span class="t w64 g3"><svg class="ic" viewBox="0 0 16 16"><use href="#zoom"/></svg>缩放<i class="cr"></i></span>
    <span class="t w61 g3"><svg class="ic" viewBox="0 0 16 16"><use href="#hand"/></svg>平移<i class="cr"></i></span>
    <span class="t w80"><svg class="ic" viewBox="0 0 16 16"><use href="#rot"/></svg>屏幕旋转<i class="cr tight"></i></span><i class="sep"></i>
    <span class="t w74 g3"><svg class="ic" viewBox="0 0 16 16"><use href="#layer"/></svg>选择楼层</span>
    <span class="t g3"><svg class="ic" viewBox="0 0 16 16"><use href="#wire"/></svg>线框</span>
  </div>
</div>

<div class="work d-flex flex-none">

  <div class="col-l d-flex flex-column">
    <div class="title act"><span>模块导航栏</span><svg><use href="#pin"/></svg><svg><use href="#cls"/></svg></div>
    <button class="btn wbtn h22" type="button">工程设置</button>
    <button class="btn wbtn h21" type="button">绘图输入</button>
    <div class="lbar d-flex align-items-center">
      <svg class="ic" viewBox="0 0 16 16"><path d="M3 0h3v3h3v3H6v3H3V6H0V3h3zM10 6h3v3h3v3h-3v3h-3v-3H7V9h3z" fill="#0a5d5a"/></svg>
      <svg class="ic" viewBox="0 0 16 16"><path d="M0 3h8v2.500H0zM8 10h8v2.500H8z" fill="#0a5d5a"/></svg>
    </div>
    <div class="box tree-side d-flex">
      <div class="tree">
        <div class="kid1"><div class="kid2">
          <div class="nd l2"><i class="dots d9"></i><svg class="ic" viewBox="0 0 16 16"><use href="#beam"/></svg>梁<span class="lat k">(L)</span></div>
          <div class="nd l2"><i class="dots d9"></i><svg class="ic" viewBox="0 0 16 16"><use href="#slab"/></svg>现浇板<span class="lat">(B)</span></div>
        </div></div>
        <div class="nd l1"><svg class="tw" viewBox="0 0 7 9"><path d="M1 0l5 4.5L1 9z" fill="#fff" stroke="#aaa"/></svg><i class="dots d5"></i><svg class="ic" viewBox="0 0 16 16"><use href="#fo"/></svg>轴线</div>
        <div class="nd l1"><svg class="tw" viewBox="0 0 7 9"><path d="M1 0l5 4.5L1 9z" fill="#fff" stroke="#aaa"/></svg><i class="dots d5"></i><svg class="ic" viewBox="0 0 16 16"><use href="#fo"/></svg>柱</div>
        <div class="nd l1"><svg class="tw" viewBox="0 0 7 9"><path d="M1 0l5 4.5L1 9z" fill="#fff" stroke="#aaa"/></svg><i class="dots d5"></i><svg class="ic" viewBox="0 0 16 16"><use href="#fo"/></svg>墙</div>
        <div class="nd l1"><svg class="tw" viewBox="0 0 7 9"><path d="M1 0l5 4.5L1 9z" fill="#fff" stroke="#aaa"/></svg><i class="dots d5"></i><svg class="ic" viewBox="0 0 16 16"><use href="#fo"/></svg>门窗洞</div>
        <div class="nd l1"><svg class="tw" viewBox="0 0 7 9"><path d="M1 0l5 4.5L1 9z" fill="#fff" stroke="#aaa"/></svg><i class="dots d5"></i><svg class="ic" viewBox="0 0 16 16"><use href="#fo"/></svg>梁</div>
        <div class="nd l1"><svg class="tw" viewBox="0 0 7 9"><path d="M1 0l5 4.5L1 9z" fill="#fff" stroke="#aaa"/></svg><i class="dots d5"></i><svg class="ic" viewBox="0 0 16 16"><use href="#fo"/></svg>板</div>
        <div class="nd l1"><svg class="tw" viewBox="0 0 7 9"><path d="M1 8h6V1z" fill="#444"/></svg><i class="dots d5"></i><svg class="ic" viewBox="0 0 16 16"><use href="#foo"/></svg>基础</div>
        <div class="kid1"><div class="kid2">
          <div class="nd l2"><i class="dots d9"></i><svg class="ic" viewBox="0 0 16 16"><use href="#strip"/></svg>基础梁<span class="lat k">(F)</span></div>
          <div class="nd l2"><i class="dots d9"></i><svg class="ic" viewBox="0 0 16 16"><use href="#raft"/></svg>筏板基础<span class="lat k">(M)</span></div>
          <div class="nd l2"><i class="dots d9"></i><svg class="ic" viewBox="0 0 16 16"><use href="#sump"/></svg>集水坑<span class="lat k">(K)</span></div>
          <div class="nd l2"><i class="dots d9"></i><svg class="ic" viewBox="0 0 16 16"><use href="#pier"/></svg>柱墩<span class="lat k">(Y)</span></div>
          <div class="nd l2"><i class="dots d9"></i><svg class="ic" viewBox="0 0 16 16"><use href="#sq1"/></svg>筏板主筋<span class="lat k">(R)</span></div>
          <div class="nd l2"><i class="dots d9"></i><svg class="ic" viewBox="0 0 16 16"><use href="#sq2"/></svg>筏板负筋<span class="lat k">(X)</span></div>
          <div class="nd l2"><i class="dots d9"></i><svg class="ic" viewBox="0 0 16 16"><use href="#iso"/></svg>独立基础<span class="lat k">(P)</span></div>
          <div class="nd l2"><i class="dots d9"></i><div class="sel-soft"><svg class="ic" viewBox="0 0 16 16"><use href="#strip"/></svg>条形基础<span class="lat k">(T)</span></div></div>
          <div class="nd l2"><i class="dots d9"></i><svg class="ic" viewBox="0 0 16 16"><use href="#cap"/></svg>桩承台<span class="lat k">(V)</span></div>
          <div class="nd l2"><i class="dots d9"></i><svg class="ic" viewBox="0 0 16 16"><use href="#strip"/></svg>承台梁<span class="lat k">(F)</span></div>
          <div class="nd l2"><i class="dots d9"></i><svg class="ic" viewBox="0 0 16 16"><use href="#pile"/></svg>桩<span class="lat k">(U)</span></div>
          <div class="nd l2"><i class="dots d9"></i><svg class="ic" viewBox="0 0 16 16"><use href="#band"/></svg>基础板带<span class="lat k">(W)</span></div>
        </div></div>
        <div class="nd l1"><svg class="tw" viewBox="0 0 7 9"><path d="M1 0l5 4.5L1 9z" fill="#fff" stroke="#aaa"/></svg><i class="dots d5"></i><svg class="ic" viewBox="0 0 16 16"><use href="#fo"/></svg>其它</div>
        <div class="nd l1"><svg class="tw" viewBox="0 0 7 9"><path d="M1 0l5 4.5L1 9z" fill="#fff" stroke="#aaa"/></svg><i class="dots d5"></i><svg class="ic" viewBox="0 0 16 16"><use href="#fo"/></svg>自定义</div>
        <div class="nd l1"><svg class="tw" viewBox="0 0 7 9"><path d="M1 8h6V1z" fill="#444"/></svg><i class="dots d5"></i><svg class="ic" viewBox="0 0 16 16"><use href="#foo"/></svg><span class="lat">CAD</span>识别<svg class="ic nb" viewBox="0 0 16 16"><use href="#ic-cols"/></svg><span class="new-tag">NEW</span></div>
        <div class="kid2 cad-kids">
          <div class="nd l2"><i class="dots d9"></i><svg class="ic" viewBox="0 0 16 16"><use href="#cadx"/></svg><span class="lat">CAD</span>草图</div>
          <div class="nd l2"><i class="dots d9"></i><svg class="ic" viewBox="0 0 16 16"><use href="#magn"/></svg>智能识别</div>
          <div class="nd l2"><i class="dots d9"></i><svg class="ic" viewBox="0 0 16 16"><use href="#grx"/></svg>识别轴网</div>
          <div class="nd l2"><i class="dots d9"></i><svg class="ic" viewBox="0 0 16 16"><use href="#cadx"/></svg>识别柱大样</div>
          <div class="nd l2"><i class="dots d9"></i><svg class="ic" viewBox="0 0 16 16"><use href="#colx"/></svg>识别柱</div>
          <div class="nd l2"><i class="dots d9"></i><svg class="ic" viewBox="0 0 16 16"><use href="#wlx"/></svg>识别墙</div>
          <div class="nd l2"><i class="dots d9"></i><svg class="ic" viewBox="0 0 16 16"><use href="#wdx"/></svg>识别门窗洞</div>
          <div class="nd l2"><i class="dots d9"></i><svg class="ic" viewBox="0 0 16 16"><use href="#colx"/></svg>识别梁</div>
          <div class="nd l2"><i class="dots d9"></i><svg class="ic" viewBox="0 0 16 16"><use href="#wdx"/></svg>识别板</div>
          <div class="nd l2"><i class="dots d9"></i><svg class="ic" viewBox="0 0 16 16"><use href="#grx"/></svg>识别受力筋</div>
          <div class="nd l2"><i class="dots d9"></i><svg class="ic" viewBox="0 0 16 16"><use href="#colx"/></svg>识别负筋</div>
          <div class="nd l2"><i class="dots d9"></i><svg class="ic" viewBox="0 0 16 16"><use href="#iso"/></svg>识别独立基础</div>
          <div class="nd l2"><i class="dots d9"></i><svg class="ic" viewBox="0 0 16 16"><use href="#cap"/></svg>识别桩承台</div>
          <div class="nd l2"><i class="dots d9"></i><svg class="ic" viewBox="0 0 16 16"><use href="#pile"/></svg>识别桩</div>
        </div>
      </div>
      <div class="sbar d-flex flex-column">
        <u><i class="up"></i></u><div class="sp72"></div><div class="thumb thumb-a"><i></i></div><u class="mt-auto"><i class="down"></i></u>
      </div>
    </div>
    <button class="btn wbtn h22" type="button">单构件输入</button>
    <button class="btn wbtn h21" type="button">报表预览</button>
  </div>

  <div class="col-m d-flex flex-column">
    <div class="title"><span>构件列表</span><svg><use href="#pin"/></svg><svg><use href="#cls"/></svg></div>
    <div class="m-bar d-flex align-items-center gap-2">
      <span class="t g3"><svg class="ic" viewBox="0 0 16 16"><path d="M1 4h3V1h3v3h3v3H7v3H4V7H1z" fill="#e8c84c" stroke="#9a8020" stroke-width=".6"/><path d="M5 9h11v7H5z" fill="#dfe9f8" stroke="#34528f"/><path d="M5 11.5h11M10 11.5V16" stroke="#34528f"/></svg>新建<i class="cr tight"></i></span>
      <svg class="ic" viewBox="0 0 16 16"><path d="M2 2l12 12M14 2L2 14" stroke="#444" stroke-width="2"/></svg>
      <svg class="ic" viewBox="0 0 16 16"><path d="M1 1h7l2 2v9H1z" fill="#dbe8f8" stroke="#5a83c0"/><path d="M6 5h7l2 2v8H6z" fill="#f3f7fd" stroke="#5a83c0"/><path d="M8 9h5M8 11h5" stroke="#5a83c0"/></svg>
    </div>
    <div class="m-search d-flex">
      <div class="m-input">搜索构件...</div>
      <svg class="ic ms-1 mt-1" viewBox="0 0 16 16"><circle cx="9" cy="6" r="4.5" fill="#e8f4fb" stroke="#4a9ad6" stroke-width="2"/><path d="M6 9l-4 5" stroke="#4a9ad6" stroke-width="2.4"/></svg>
    </div>
    <div class="box m-tree">
      <div class="nd ps-2"><svg class="tw ms-1" viewBox="0 0 7 9"><path d="M1 8h6V1z" fill="#444"/></svg><i class="dots d5"></i><svg class="ic me-1" viewBox="0 0 16 16"><use href="#strip"/></svg>条形基础</div>
      <div class="nd"><svg class="tw m-lvl2" viewBox="0 0 7 9"><path d="M1 8h6V1z" fill="#444"/></svg><i class="dots d5"></i><svg class="ic ic-gear" viewBox="0 0 12 12"><use href="#gear"/></svg><span class="lat">1-1</span>条形基础</div>
      <div class="nd m-lvl3"><i class="dots d10"></i><svg class="ic ic-gear" viewBox="0 0 12 12"><use href="#gear"/></svg><span class="lat">(</span>顶<span class="lat">)2-2</span>条形基础</div>
      <div class="nd m-lvl3"><i class="dots d10"></i><span class="selrow"><svg class="ic ic-gear" viewBox="0 0 12 12"><use href="#gear"/></svg><span class="lat">(</span>底<span class="lat">)1-1</span>条形基础</span></div>
    </div>
    <div class="m-gap"></div>
    <div class="title"><span>属性编辑器</span><svg><use href="#pin"/></svg><svg><use href="#cls"/></svg></div>
    <div class="box grid-box">
      <table class="table pg">
        <colgroup><col class="w21"><col><col class="w79"><col class="pg-x"></colgroup>
        <tr class="hd"><th></th><th>属性名称</th><th class="gold">属性值</th><th>附加</th></tr>
        <tr class="act"><td class="rn">1</td><td class="nm">名称</td><td class="vl"><span class="val">1-1</span>条形基础</td><td></td></tr>
        <tr><td class="rn">2</td><td class="nm">宽度<span class="lat">(mm)</span></td><td><span class="val">800</span></td><td class="ck"><i class="cbx"></i></td></tr>
        <tr><td class="rn">3</td><td class="nm">高度<span class="lat">(mm)</span></td><td><span class="val">200</span></td><td class="ck"><i class="cbx"></i></td></tr>
        <tr><td class="rn">4</td><td class="nm blue">相对偏心距<span class="lat">(mm)</span></td><td><span class="val">0</span></td><td class="ck"><i class="cbx"></i></td></tr>
        <tr><td class="rn">5</td><td class="nm">相对底标高<span class="lat">(m)</span></td><td><span class="val">&nbsp;(0)</span></td><td class="ck"><i class="cbx"></i></td></tr>
        <tr><td class="rn">6</td><td class="nm blue">受力筋</td><td><span class="rebar">Φ</span><span class="val">12@200</span></td><td class="ck"><i class="cbx"></i></td></tr>
        <tr><td class="rn">7</td><td class="nm blue">分布筋</td><td><span class="rebar">Φ</span><span class="val">10@200</span></td><td class="ck"><i class="cbx"></i></td></tr>
        <tr><td class="rn">8</td><td class="nm blue">其它钢筋</td><td></td><td></td></tr>
        <tr><td class="rn">9</td><td class="nm">偏心条形基础</td><td>否</td><td class="ck"><i class="cbx"></i></td></tr>
        <tr><td class="rn">10</td><td class="nm">备注</td><td></td><td class="ck"><i class="cbx"></i></td></tr>
        <tr><td class="rn">11</td><td class="grey"><i class="pl">+</i>锚固搭接</td><td></td><td></td></tr>
      </table>
      <div class="sbar d-flex flex-column pg-bar">
        <u><i class="up"></i></u><div class="thumb thumb-b"><i></i></div><u class="mt-auto"><i class="down"></i></u>
      </div>
    </div>
  </div>

  <div class="col-c d-flex flex-column">
    <div class="d-flex seg-wide">
      <div class="seg d-flex align-items-center r1 w-100">
        <i class="grip"></i>
        <span class="t w48"><svg class="ic" viewBox="0 0 16 16"><use href="#del"/></svg>删除</span><i class="sep"></i>
        <span class="t w52"><svg class="ic" viewBox="0 0 16 16"><use href="#copy"/></svg>复制</span>
        <span class="t w48"><svg class="ic" viewBox="0 0 16 16"><use href="#mirror"/></svg>镜像</span><i class="sep"></i>
        <span class="t w52"><svg class="ic" viewBox="0 0 16 16"><use href="#move"/></svg>移动</span>
        <span class="t w47"><svg class="ic" viewBox="0 0 16 16"><use href="#turn"/></svg>旋转</span><i class="sep"></i>
        <span class="t w51"><svg class="ic" viewBox="0 0 16 16"><use href="#ext"/></svg>延伸</span>
        <span class="t w47"><svg class="ic" viewBox="0 0 16 16"><use href="#trim"/></svg>修剪</span><i class="sep"></i>
        <span class="t w51"><svg class="ic" viewBox="0 0 16 16"><use href="#brk"/></svg>打断</span>
        <span class="t w51"><svg class="ic" viewBox="0 0 16 16"><use href="#brk"/></svg>合并</span>
        <span class="t w48 off"><svg class="ic" viewBox="0 0 16 16"><use href="#split"/></svg>分割</span><i class="sep"></i>
        <span class="t w59"><svg class="ic" viewBox="0 0 16 16"><use href="#align"/></svg>对齐<i class="cr tight"></i></span>
        <span class="t w51"><svg class="ic" viewBox="0 0 16 16"><use href="#off"/></svg>偏移</span>
        <span class="t"><svg class="ic" viewBox="0 0 16 16"><use href="#strch"/></svg>拉伸</span>
        <span class="more">»</span>
      </div>
    </div>
    <div class="d-flex seg-wide">
      <div class="seg d-flex align-items-center r2a">
        <i class="grip tight"></i>
        <div class="dd w59"><b>首层</b><em><i class="cr"></i></em></div>
        <div class="dd w70"><b>基础</b><em><i class="cr"></i></em></div>
        <div class="dd w70"><b>条形基础</b><em><i class="cr"></i></em></div>
        <div class="dd w70"><b>1-1条形基</b><em><i class="cr"></i></em></div>
        <div class="dd w70"><b>整体</b><em><i class="cr"></i></em></div>
        <i class="sep tight"></i>
        <span class="t w51 on"><svg class="ic" viewBox="0 0 16 16"><use href="#prop"/></svg>属性</span>
        <span class="t ml3"><svg class="ic" viewBox="0 0 16 16"><use href="#edit"/></svg>编辑钢筋</span>
        <span class="more">»</span>
      </div>
      <div class="seg d-flex align-items-center r2b">
        <i class="grip"></i>
        <span class="t w51 ml2"><svg class="ic" viewBox="0 0 16 16"><use href="#twopt"/></svg>两点</span>
        <span class="t"><svg class="ic" viewBox="0 0 16 16"><use href="#para"/></svg>平行</span>
        <span class="more">»</span>
      </div>
    </div>
    <div class="d-flex seg-wide">
      <div class="seg d-flex align-items-center r3a">
        <i class="grip tight"></i>
        <span class="t w51 on"><svg class="ic" viewBox="0 0 16 16"><use href="#arw"/></svg>选择</span>
        <span class="t w12"><i class="cr"></i></span><i class="sep"></i>
        <span class="t w50 ml2"><svg class="ic" viewBox="0 0 16 16"><use href="#dline"/></svg>直线</span>
        <span class="t w75"><svg class="ic" viewBox="0 0 16 16"><use href="#ptl"/></svg>点加长度</span>
        <span class="t w84"><svg class="ic" viewBox="0 0 16 16"><use href="#arc"/></svg>三点画弧<i class="cr"></i></span>
        <div class="dd w55"><b></b><em><i class="cr"></i></em></div>
        <span class="t w47 ml2"><svg class="ic" viewBox="0 0 16 16"><use href="#rect"/></svg>矩形</span><i class="sep"></i>
        <span class="t"><svg class="ic" viewBox="0 0 16 16"><use href="#smart"/></svg>智能布置<i class="cr tight"></i></span>
      </div>
      <div class="seg d-flex align-items-center r3b"><i class="grip"></i></div>
    </div>
    <div class="cad">
<svg width="750" height="643" viewBox="469 143 750 643" xmlns="http://www.w3.org/2000/svg">
<rect x="824" y="207" width="51" height="208" fill="#008000"/>
<!-- grid axes -->
<path class="g1" d="M470 217H576M576 217V391M470 217.5M565 206L587 228M565 380L587 402M850 497H1102M839 507L860 485M949 508L971 485M1092 507L1114 485M960 611V680M1102 611V680"/>
<path class="gy" d="M628 217.5H1219M796 391.5H1219M850 165V611M960 166V611M1102 166V611"/>
<path class="wh" d="M628 391.5H796M850 500V611M960 500V611M1102 500V611"/>
<!-- outlines -->
<path class="cy" d="M1219 193.5H825.5V415.5H1219"/>
<path class="mgt" d="M1219 205.5H837.5V404.5H1219"/>
<path class="cy" d="M867.500 235.500H942.500V373.500H867.500ZM977.500 235.500H1084.500V373.500H977.500ZM1219 235.500H1120.500V373.500H1219"/>
<path class="mgt" d="M856.500 224.500H954.500V385.500H856.500M966.500 224.500H1096.500V385.500H966.500ZM1219 224.500H1108.500V385.500H1219"/>
<!-- section marks -->
<path class="mgt" d="M1038 165V183M1038 244V262M1038 346V364M1038 424V443M801 260H821M872 260H892M918 272.500H936M982 272.500H1002M1060 272.500H1079M1125 272.500H1144"/>
<text class="ct mg" x="1025" y="179">1</text><text class="ct mg" x="1025" y="257">1</text><text class="ct mg" x="1047" y="359">1</text><text class="ct mg" x="1047" y="438">1</text>
<text class="ct mg" x="810" y="278">1</text><text class="ct mg" x="880" y="278">1</text>
<text class="ct mg" x="925" y="262">2</text><text class="ct mg" x="991" y="262">2</text><text class="ct mg" x="1067" y="262">2</text><text class="ct mg" x="1133" y="262">2</text>
<!-- yellow/red -->
<rect x="843.500" y="211.500" width="13" height="13" fill="none" stroke="#ff0"/><rect x="843.500" y="385.500" width="13" height="13" fill="none" stroke="#ff0"/>
<path d="M856 217.500H901M856 391.500H903" stroke="#f00" fill="none"/>
<!-- green dims -->
<path class="w2" d="M677 218H768M677 391H768M681 213V397M723 213V397"/>
<path class="w2" d="M832 309H861M949 309H971M1091 309H1114M821 343H872M937 343H984M1079 343H1126"/>
<path class="w1" d="M836 267V313M849.500 267V347M855 267V313M825 280V347M868.500 288V347M942.500 288V347M953 267V313M960 267V347M966.500 267V313M977.500 288V347M1084.500 288V347M1095 267V313M1102 267V347M1108 267V313M1120.500 288V347"/>
<path class="w2" d="M1152 193H1202M1152 236H1202M1140 218H1202M1140 205H1164M1140 227H1164M1197 188V241M1160 200V229"/>
<path class="w2" d="M1152 372H1202M1152 414H1202M1140 391H1202M1140 381H1164M1140 403H1164M1197 368V420M1160 380V408"/>
<path class="w2" d="M849 504V591M959 504V548M1101 504V548M845 549H1219M845 591H1219"/>
<path class="wh" d="M677 221l4-4M679 394l4-4M721 221l4-4M721 394l4-4M830 311l4-4M846 311l4-4M853 311l4-4M947 311l4-4M955 311l4-4M962 311l4-4M1090 311l4-4M1097 311l4-4M1104 311l4-4M823 345l4-4M847 345l4-4M866 345l4-4M939 345l4-4M958 345l4-4M977 345l4-4M1082 345l4-4M1100 345l4-4M1118 345l4-4M1195 195l4-4M1195 238l4-4M1195 220l4-4M1158 207l4-4M1158 229l4-4M1195 374l4-4M1195 416l4-4M1195 393l4-4M1158 383l4-4M1158 405l4-4M847 551l4-4M957 551l4-4M1099 551l4-4M847 593l4-4"/>
<!-- leaders -->
<path class="wh" d="M889 163.500H859.500L850 207M1175 163.500H1138L1126 217M838 250.500H780M851 407L859 446.500H889M897 392L910 446.500H952"/>
<text class="ct" x="877" y="157">GZ</text><text class="ct" x="1160" y="157">DQL1</text><text class="ct" x="799" y="244">DQL1</text><text class="ct" x="877" y="439">GZ</text><text class="ct" x="935" y="439">DQL1</text>
<!-- dim text -->
<text class="ct" x="825" y="292">240</text><text class="ct" x="870" y="292">120</text><text class="ct" x="940" y="292">120</text><text class="ct" x="980" y="292">120</text><text class="ct" x="1082" y="292">120</text><text class="ct" x="1122" y="292">120</text>
<text class="ct" x="813" y="326">460</text><text class="ct" x="882" y="326">340</text><text class="ct" x="928" y="326">340</text><text class="ct" x="993" y="326">340</text><text class="ct" x="1070" y="326">340</text><text class="ct" x="1135" y="326">340</text>
<text class="ct" transform="translate(1142 191) rotate(-90)">240</text><text class="ct" transform="translate(1181 180) rotate(-90)">460</text><text class="ct" transform="translate(1142 236) rotate(-90)">120</text><text class="ct" transform="translate(1181 248) rotate(-90)">340</text>
<text class="ct" transform="translate(1142 372) rotate(-90)">120</text><text class="ct" transform="translate(1181 359) rotate(-90)">340</text><text class="ct" transform="translate(1142 417) rotate(-90)">240</text><text class="ct" transform="translate(1181 428) rotate(-90)">460</text>
<text class="ct xl" transform="translate(576 300) rotate(-90)">3300</text><text class="ct s" transform="translate(664 304) rotate(-90)">3300</text><text class="ct s" transform="translate(706 304) rotate(-90)">3300</text>
<text class="ct l" x="909" y="496">2100</text><text class="ct l" x="1035" y="496">2700</text>
<text class="ct" x="905" y="532.500">2100</text><text class="ct" x="1032" y="532.500">2700</text><text class="ct" x="1181" y="532.500">3000</text><text class="ct" x="1055" y="574">7800</text>
<!-- bubbles -->
<g class="bub"><circle cx="602" cy="217" r="26.500"/><circle cx="602" cy="391" r="26.500"/><circle cx="850" cy="638" r="26.500"/><circle cx="960" cy="638" r="26.500"/><circle cx="1102" cy="638" r="26.500"/></g>
<text class="ct bb" x="602" y="218">B</text><text class="ct bb" x="602" y="392">A</text><text class="ct bb" x="850" y="639">1</text><text class="ct bb" x="960" y="639">2</text><text class="ct bb" x="1102" y="639">3</text>
<g class="g1"><circle cx="482" cy="217" r="12.500"/><circle cx="705" cy="391" r="12.500"/><circle cx="850" cy="535" r="13"/><circle cx="960" cy="693" r="12.500"/><circle cx="1102" cy="693" r="12.500"/></g>
<text class="ct sm" x="483" y="217">B</text><text class="ct sm" x="706" y="392">A</text><text class="ct sm" x="850" y="535">1</text><text class="ct sm" x="961" y="693">2</text><text class="ct sm" x="1102" y="693">3</text>
<!-- ucs -->
<path d="M524 736V696" stroke="#0f0" stroke-width="3"/><path d="M524 687l4 13h-8z" fill="#0f0"/>
<path d="M524 735.500H562" stroke="#f00" stroke-width="3.500"/><path d="M574 735.500l-13 5v-10z" fill="#f00"/>
<path d="M534 690l4 5 4-5M538 695v5" stroke="#0f0" fill="none"/>
<path d="M561 716l9 9M570 716l-9 9" stroke="#f00"/>
<!-- title -->
<text class="ct ti" x="962" y="731">基础平面图</text>
<path class="cyl" d="M951 752.500H1156M951 760.500H1157"/>
<text class="ct ra" x="1160" y="760">1:100</text>
</svg>
    </div>
    <div class="snap d-flex">
      <div class="seg d-flex align-items-center sn1">
        <i class="grip"></i>
        <span class="t w48"><svg class="ic" viewBox="0 0 16 16"><use href="#ortho"/></svg>正交</span>
        <span class="t w75 on g3"><svg class="ic" viewBox="0 0 16 16"><use href="#snap1"/></svg>对象捕捉</span>
        <span class="t w75 on g3"><svg class="ic" viewBox="0 0 16 16"><use href="#snap2"/></svg>动态输入</span>
      </div>
      <div class="seg d-flex align-items-center sn2">
        <i class="grip"></i>
        <span class="t w46 ml1 g3"><svg class="ic" viewBox="0 0 16 16"><use href="#cross"/></svg>交点</span>
        <span class="t w51 on g3"><svg class="ic" viewBox="0 0 16 16"><use href="#perp"/></svg>垂点</span>
        <span class="t w51 on g3"><svg class="ic" viewBox="0 0 16 16"><use href="#mid"/></svg>中点</span>
        <span class="t w50 ml4"><svg class="ic" viewBox="0 0 16 16"><use href="#vert"/></svg>顶点</span>
        <span class="t"><svg class="ic" viewBox="0 0 16 16"><use href="#coord"/></svg>坐标</span>
      </div>
      <div class="seg d-flex align-items-center sn3">
        <i class="grip tight"></i>
        <div class="dd w57"><b>不偏移</b><em><i class="cr"></i></em></div>
        <i class="sep tight"></i>
        <span class="lblg w20">X=</span>
        <div class="num"><i class="a"></i>0<i class="b"></i></div>
        <span class="lblg ms-1 me-1">mm Y=</span>
        <div class="num"><i class="a"></i>0<i class="b"></i></div>
        <span class="more">»</span>
      </div>
    </div>
  </div>

  <div class="col-r d-flex flex-column">
    <div class="title"><span>图纸管理</span><svg><use href="#pin"/></svg><svg><use href="#cls"/></svg></div>
    <ul class="nav nav-tabs tabs">
      <li class="nav-item"><a class="nav-link active" href="#">图纸文件列表</a></li>
      <li class="nav-item"><a class="nav-link ina" href="#">图纸楼层对照表</a></li>
    </ul>
    <div class="pane d-flex flex-column">
      <div class="pbtns d-flex">
        <div class="pb m">添加图纸</div><div class="pb c"><i class="cr tight"></i></div><div class="pb m">整理图纸</div><div class="pb m">定位图纸</div>
        <div class="more-box">»</div>
      </div>
      <div class="tbl">
        <table class="table rg">
          <colgroup><col class="w21"><col><col class="r-x"></colgroup>
          <tr><th></th><th class="gold">图纸名称</th><th>图纸比</th></tr>
          <tr><td class="rn">1</td><td><i class="pl ms-1">−</i>罗塘传达室及大门结构.</td><td>1:1</td></tr>
          <tr><td class="rn gr">2</td><td class="cur">）</td><td class="y">1:1</td></tr>
          <tr class="y"><td class="rn">3</td><td><i class="tee"></i>平面布置图<span class="lat">.CADI</span></td><td>1:1</td></tr>
        </table>
        <div class="hbar d-flex align-items-center">
          <u><i class="lf"></i></u><em></em><u class="ms-auto"><i class="rt"></i></u>
        </div>
      </div>
    </div>
    <div class="r-gap"></div>
    <div class="title"><span><span class="lat">CAD</span>图层显示</span><svg><use href="#pin"/></svg><svg><use href="#cls"/></svg></div>
    <div class="box r-layers">
      <div class="nd r"><svg class="tw" viewBox="0 0 7 9"><path d="M1 0l5 4.5L1 9z" fill="#fff" stroke="#aaa"/></svg><i class="dots d5"></i><svg class="ic" viewBox="0 0 12 12"><rect width="12" height="12" fill="#eee" stroke="#999"/><rect x="2" y="2" width="8" height="8" fill="#2a8fd0"/></svg>已提取的<span class="lat">CAD</span>图层</div>
      <div class="nd r"><svg class="tw" viewBox="0 0 7 9"><path d="M1 0l5 4.5L1 9z" fill="#fff" stroke="#aaa"/></svg><i class="dots d5"></i><svg class="ic" viewBox="0 0 12 12"><rect width="12" height="12" fill="#f4f4f4" stroke="#999"/><path d="M2 6l3 3 5-7" stroke="#2a4fb0" stroke-width="1.6" fill="none"/></svg><span class="lat">CAD</span>原始图层</div>
    </div>
  </div>
</div>

<div class="status d-flex align-items-center flex-none">
  <div class="cell c1"><span class="lat">X=15308 Y=53093</span></div>
  <div class="cell c2">层高<span class="lat">:3.3m</span></div>
  <div class="cell c3">底标高<span class="lat">:0m</span></div>
  <div class="cell c4"><span class="lat">0</span></div>
  <div class="cell c5">按鼠标左键指定第一个角点，或拾取构件图元</div>
  <div class="cell c6"><span class="lat">906.9 FPS</span></div>
</div>

<div class="taskbar d-flex align-items-center flex-none">
  <svg class="start" viewBox="0 0 40 38"><defs><radialGradient id="orb" cx=".5" cy=".3" r=".8"><stop offset="0" stop-color="#6fb6ea"/><stop offset=".55" stop-color="#1a5f9e"/><stop offset="1" stop-color="#0b2a50"/></radialGradient></defs><circle cx="20" cy="19" r="18.500" fill="url(#orb)" stroke="#8fb4c8"/><path d="M10 13c3-2 6-2 9-1l-1 7c-3-1-6-1-9 1z" fill="#e85a2c"/><path d="M20 12c3 1 6 1 10-1l-2 8c-3 1-6 1-9 0z" fill="#7cc242"/><path d="M9 21c3-1 6-1 9 0l-1 7c-3-1-6-1-10 1z" fill="#3fa9f0"/><path d="M19 21c3 1 6 1 9 0l-2 7c-3 1-6 1-8 0z" fill="#f6c42c"/></svg>
  <svg class="pin" viewBox="0 0 36 36"><circle cx="24" cy="10" r="9" fill="#4aa3e0"/><circle cx="12" cy="11" r="9" fill="#a8cc2a"/><circle cx="24" cy="25" r="9" fill="#e0504a"/><circle cx="12" cy="26" r="9" fill="#f2c31e"/><circle cx="17" cy="18" r="5" fill="#2a3d4a"/></svg>
  <div class="tbtn tb1"><svg class="big" viewBox="0 0 32 32"><circle cx="16" cy="16" r="15" fill="#ee7a22"/><path d="M5 17c4-8 13-11 20-6-3 0-4 1-5 3 3 1 5 4 5 8-3-3-6-4-9-3 1 3 0 5-3 6 1-3-1-6-8-8z" fill="#fff"/></svg></div>
  <div class="tbtn tb2"><svg class="big" viewBox="0 0 32 32"><path d="M3 8h10l2 3h14v18H3z" fill="#e7cd79" stroke="#a99248"/><path d="M7 5h14v7H7z" fill="#fff" stroke="#bbb"/><path d="M3 14h26v15H3z" fill="#f5e6a6"/><path d="M8 20h16v9h-3v-6H11v6H8z" fill="#69b6e8"/></svg></div>
  <div class="tbtn tb3"><svg class="big wide" viewBox="0 0 32 32"><rect x="1" y="1" width="30" height="30" rx="2" fill="#2060b4" stroke="#a9b5c0"/><text x="16" y="22" font-size="12" font-weight="700" fill="#fff" text-anchor="middle" font-family="Liberation Mono">CAD</text></svg></div>
  <div class="tbtn tb4"><svg class="big" viewBox="0 0 32 32"><rect width="32" height="32" rx="5" fill="#17bd45"/><path d="M24 10H8v6h16v6H8" stroke="#fff" stroke-width="2.500" fill="none"/></svg></div>
  <div class="tbtn tb5 hi"><svg class="big" viewBox="0 0 32 32"><rect width="32" height="32" rx="5" fill="#0a97ea"/><path d="M16 4c-3 0-3 5 0 7 3-2 3-7 0-7zM16 28c-3 0-3-5 0-7 3 2 3 7 0 7zM4 16c0-3 5-3 7 0-2 3-7 3-7 0zM28 16c0-3-5-3-7 0 2 3 7 3 7 0zM16 8v16M8 16h16" stroke="#fff" stroke-width="2.500" fill="none"/></svg></div>
  <div class="tray d-flex align-items-center">
    <span class="ch">CH</span>
    <svg class="ic mr6" viewBox="0 0 16 16"><path d="M3 1h8l3 3v11H3z" fill="#dbe8f8" stroke="#88a"/><path d="M5 7h7M5 10h7" stroke="#88a"/><path d="M4 5l3 5 4-9" stroke="#e0281e" stroke-width="2" fill="none"/></svg>
    <svg class="ic mr6" viewBox="0 0 16 16"><path d="M1 6h14v8H1z" fill="#bbb" stroke="#777"/><path d="M3 8h10M3 10h10M5 12h6" stroke="#777"/><path d="M6 6c0-3 4-2 6-4" stroke="#999" fill="none"/></svg>
    <svg class="ic mr8" viewBox="0 0 16 16"><circle cx="8" cy="8" r="7.500" fill="#1a2aa8" stroke="#9ab"/><text x="8" y="12" font-size="11" font-weight="700" fill="#fff" text-anchor="middle" font-family="Liberation Sans">?</text></svg>
    <span class="d-flex flex-column align-items-center gap-2 rs mr9"><svg width="10" height="8" viewBox="0 0 10 8"><path d="M3 .5h6v4H3zM1 3h6v4H1z" fill="#2a3a46" stroke="#fff"/></svg><i class="down dw"></i></span>
    <i class="up upw mr12"></i>
    <svg class="ic mr9" viewBox="0 0 16 16"><ellipse cx="8" cy="9" rx="6" ry="7" fill="#111"/><ellipse cx="8" cy="11" rx="4" ry="5" fill="#fff"/><path d="M3 8h10v2H3z" fill="#d8232a"/><path d="M4 15h3v1H4zM9 15h3v1H9z" fill="#f5a623"/></svg>
    <svg class="ic mr9" viewBox="0 0 16 16"><circle cx="8" cy="8" r="7.500" fill="#d6cc18"/><path d="M7 3h2v4h4v2H9v4H7V9H3V7h4z" fill="#157a22"/></svg>
    <svg class="ic mr7" viewBox="0 0 16 16"><path d="M4 1v3M1 4h5v3H1zM4 7v7h11" stroke="#fff" fill="none"/><path d="M6 5h9v6H6z" fill="#2a3a46" stroke="#fff"/></svg>
    <svg class="ic mr14" viewBox="0 0 16 16"><path d="M1 6h3l4-4v12l-4-4H1z" fill="#ddd"/><circle cx="12" cy="11" r="4" fill="#e0383a"/><path d="M10 9l4 4M14 9l-4 4" stroke="#fff"/></svg>
    <svg width="22" height="22" viewBox="0 0 22 22"><circle cx="11" cy="11" r="11" fill="#15b95e"/><circle cx="11" cy="11" r="8.500" fill="#2a3a46"/><text x="11" y="15" font-size="12" fill="#fff" text-anchor="middle" font-family="Liberation Sans">36</text></svg>
    <div class="clock">14:32<br>2018/10/22</div>
    <div class="desk"></div>
  </div>
</div>

<svg class="arrow-over" width="70" height="155" viewBox="350 345 70 155"><path d="M413 350L379 440 369 452 358 492 388 465 385 453z" fill="#f03a3e"/></svg>
</body>
</html>
